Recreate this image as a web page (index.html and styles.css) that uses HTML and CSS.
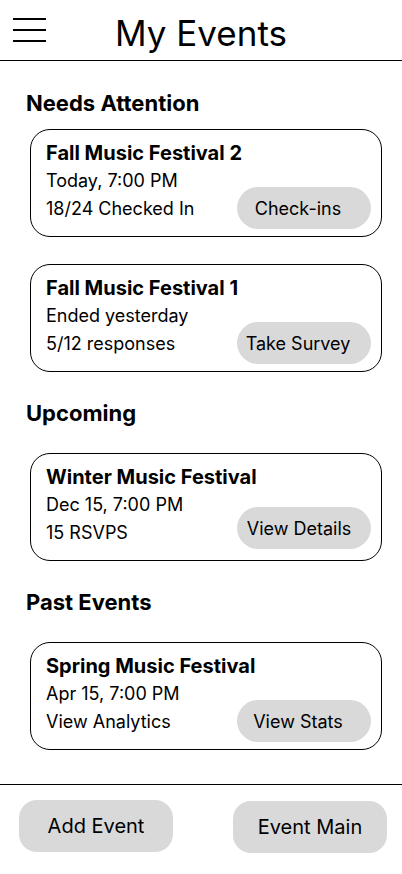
FILE: index.html
```html
<!DOCTYPE html>
<html lang="en">
<head>
<meta charset="utf-8">
<title>My Events</title>
<link rel="stylesheet" href="styles.css">
</head>
<body>
<div class="app">
  <header class="topbar">
    <button class="menu" aria-label="Menu">
      <svg width="34" height="26" viewBox="0 0 34 26"><path d="M0 2H33M0 13H33M0 24H33" stroke="#000" stroke-width="2" fill="none"/></svg>
    </button>
    <h1 class="title">My Events</h1>
  </header>
  <main class="content">
    <h2 class="section-title">Needs Attention</h2>
    <div class="card">
      <div class="card-title">Fall Music Festival 2</div>
      <div class="card-row">
        <div class="card-lines"><div>Today, 7:00 PM</div><div>18/24 Checked In</div></div>
        <button class="pill">Check-ins</button>
      </div>
    </div>
    <div class="card">
      <div class="card-title">Fall Music Festival 1</div>
      <div class="card-row">
        <div class="card-lines"><div>Ended yesterday</div><div>5/12 responses</div></div>
        <button class="pill">Take Survey</button>
      </div>
    </div>
    <h2 class="section-title">Upcoming</h2>
    <div class="card">
      <div class="card-title">Winter Music Festival</div>
      <div class="card-row">
        <div class="card-lines"><div>Dec 15, 7:00 PM</div><div>15 RSVPS</div></div>
        <button class="pill pill-raised">View Details</button>
      </div>
    </div>
    <h2 class="section-title">Past Events</h2>
    <div class="card">
      <div class="card-title">Spring Music Festival</div>
      <div class="card-row">
        <div class="card-lines"><div>Apr 15, 7:00 PM</div><div>View Analytics</div></div>
        <button class="pill">View Stats</button>
      </div>
    </div>
  </main>
  <footer class="bottombar">
    <button class="foot-btn">Add Event</button>
    <button class="foot-btn foot-btn-right">Event Main</button>
  </footer>
</div>
</body>
</html>
```

FILE: styles.css
```css
* { box-sizing: border-box; }
html, body { margin: 0; padding: 0; background: #fff; }
body { font-family: Inter, "Noto Sans", "Liberation Sans", sans-serif; color: #000; }
.app { width: 402px; height: 874px; display: flex; flex-direction: column; }
.topbar {
  height: 61px;
  flex: none;
  border-bottom: 1px solid #000;
  display: flex;
  align-items: center;
  position: relative;
}
.menu {
  background: none; border: 0; padding: 0;
  margin-left: 13px;
  width: 34px; height: 26px; display: flex;
}
.title {
  margin: 0;
  position: absolute; left: 0; right: 0; top: 12px;
  text-align: center;
  font-size: 35px; font-weight: 400; line-height: 42px;
  pointer-events: none;
}
.content {
  flex: 1;
  display: flex; flex-direction: column;
  padding: 28px 20px 0 26px;
}
.section-title {
  margin: 27px 0 0;
  font-size: 22px; font-weight: 700; line-height: 28px;
}
.section-title:first-child { margin-top: 0; }
.card {
  margin: 26px 0 0 4px;
  width: 352px; height: 108px;
  flex: none;
  border: 1px solid #000;
  border-radius: 20px;
  padding: 9px 10px 0 15px;
  display: flex; flex-direction: column;
}
.card + .card { margin-top: 27px; }
.section-title:first-child + .card { margin-top: 12px; }
.card-title { font-size: 20px; font-weight: 700; line-height: 28px; }
.card-row { display: flex; justify-content: space-between; align-items: flex-start; }
.card-lines { font-size: 18px; line-height: 28px; }
.pill {
  margin-top: 20px;
  width: 134px; height: 42px;
  padding: 0 12px 0 0;
  border: 0; border-radius: 21px;
  background: #d9d9d9;
  font-family: inherit; font-size: 18px; color: #000;
}
.pill-raised { margin-top: 16px; padding-right: 10px; }
.bottombar {
  height: 90px;
  flex: none;
  border-top: 1px solid #000;
  display: flex; justify-content: space-between; align-items: flex-start;
  padding: 15px 15px 0 19px;
}
.foot-btn {
  width: 154px; height: 52px;
  border: 0; border-radius: 18px;
  background: #d9d9d9;
  font-family: inherit; font-size: 20px; color: #000;
}
.foot-btn-right { margin-top: 1px; }
```
